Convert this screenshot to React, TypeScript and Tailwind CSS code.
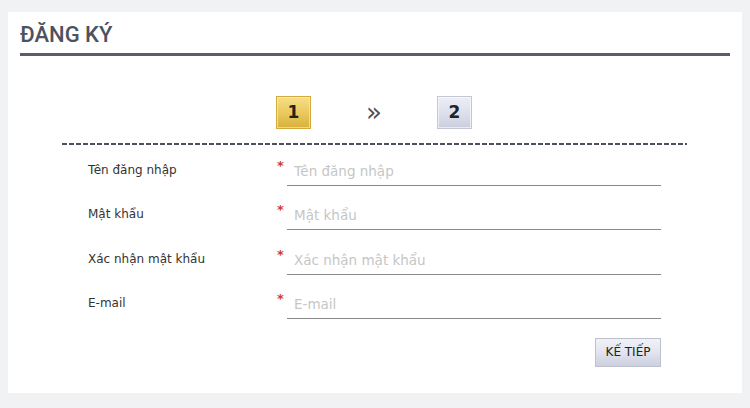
import React from "react";

const fields = [
  { label: "Tên đăng nhập", type: "text" },
  { label: "Mật khẩu", type: "password" },
  { label: "Xác nhận mật khẩu", type: "password" },
  { label: "E-mail", type: "email" },
];

export default function App() {
  return (
    <div className="min-h-[408px] w-[750px] bg-[#f1f2f4] px-[8px] pt-[12px] font-['DejaVu_Sans',sans-serif]">
      <div className="h-[381px] w-[734px] bg-white px-[12px] pt-[9px]">
        {/* heading */}
        <div className="border-b-[3px] border-[#595d69] pb-[4px]">
          <h1 className="font-['Roboto',sans-serif] text-[22px] font-medium leading-[28px] text-[#4d5260]">
            ĐĂNG KÝ
          </h1>
        </div>

        {/* step indicator */}
        <div className="mt-[40px] flex items-center justify-center gap-[55px] pr-[2px]">
          <div className="flex h-[33px] w-[35px] items-center justify-center border border-[#d2ab3c] bg-[linear-gradient(180deg,#f7df88_0%,#e9c75a_55%,#d8b13c_100%)] text-[17px] font-bold text-[#222] shadow-[inset_0_0_0_1px_rgba(255,240,190,0.6)]">
            1
          </div>
          <div className="-mt-[2px] text-[26px] leading-none text-[#4a4f5e]">»</div>
          <div className="flex h-[33px] w-[35px] items-center justify-center border border-[#c3c6d4] bg-[linear-gradient(180deg,#eceef5_0%,#dcdfeb_55%,#c9cddd_100%)] text-[17px] font-bold text-[#222] shadow-[inset_0_0_0_1px_rgba(255,255,255,0.6)]">
            2
          </div>
        </div>

        {/* divider */}
        <div className="mx-auto mt-[14px] h-[2px] w-[625px] -translate-x-[1px] bg-[repeating-linear-gradient(90deg,#4b505e_0px,#4b505e_5px,transparent_5px,transparent_7px)]" />

        {/* form */}
        <form className="ml-[68px] mt-[11px] flex flex-col gap-[14.3px]">
          {fields.map((f) => (
            <div key={f.label} className="flex items-start">
              <label className="mt-[6px] w-[189px] text-[12px] leading-[16px] text-[#333]">
                {f.label}
              </label>
              <span className="mt-[4px] w-[10px] text-[13px] font-bold leading-[12px] text-[#d23a2e]">*</span>
              <input
                type={f.type}
                placeholder={f.label}
                className="h-[30px] w-[374px] border-b border-[#8a8a8a] bg-transparent px-[7px] pt-[1px] text-[13.5px] text-[#333] outline-none placeholder:text-[#c6c6c6]"
              />
            </div>
          ))}
        </form>

        <div className="mt-[19px] flex justify-end pr-[69px]">
          <button
            type="button"
            className="h-[29px] w-[66px] border border-[#bcc0cf] bg-[linear-gradient(180deg,#f1f2f8_0%,#e2e4ee_50%,#ccd0df_100%)] text-[12px] text-[#222]"
          >
            KẾ TIẾP
          </button>
        </div>
      </div>
    </div>
  );
}
